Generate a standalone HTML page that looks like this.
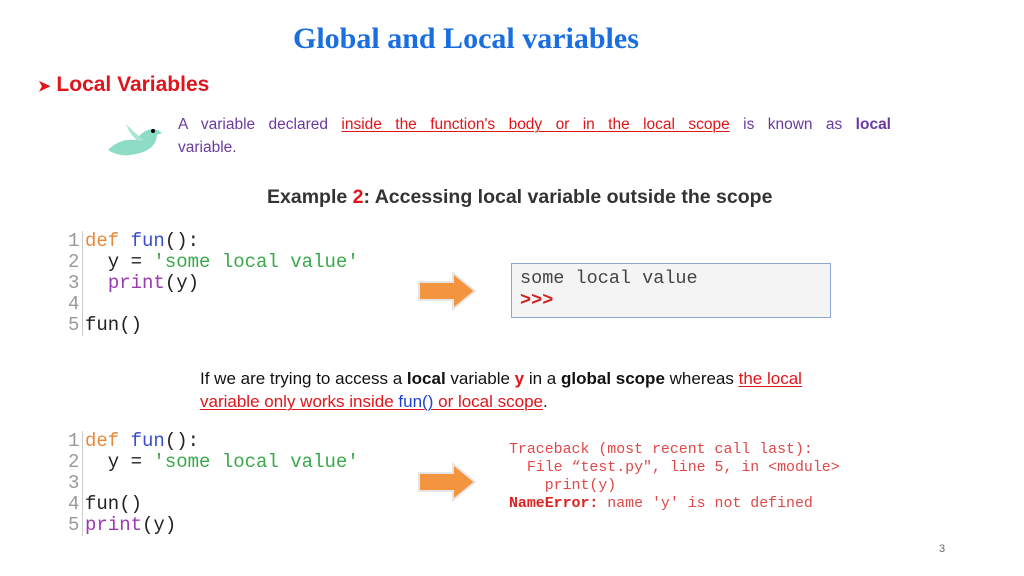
<!DOCTYPE html>
<html><head><meta charset="utf-8"><style>
body{margin:0;width:1024px;height:576px;background:#fff;position:relative;overflow:hidden;font-family:"Liberation Sans",sans-serif}
.a{position:absolute;white-space:pre}
.code{font-family:"Liberation Mono",monospace;font-size:19px;line-height:21px;color:#222}
.ln{color:#999;display:inline-block;width:14px;border-right:1px solid #ccc;margin-right:2px}
.k{color:#e8883a}.f{color:#3a4fd0}.s{color:#3aa84a}.p{color:#9a3ab0}
u{text-decoration-thickness:1px;text-underline-offset:2px}
</style></head><body>
<div class="a" style="left:293px;top:22px;font-family:'Liberation Serif',serif;font-weight:bold;font-size:30px;color:#1a6ee0">Global and Local variables</div>
<div class="a" style="left:38px;top:73px;font-size:21px;font-weight:bold;color:#e0151b"><span style="font-size:15px">&#10148;</span> Local Variables</div>
<svg class="a" style="left:106px;top:120px" width="56" height="38" viewBox="0 0 56 38"><path d="M2 30 Q14 18 30 20 Q40 6 52 10 L56 13 L51 15 Q50 30 30 34 Q14 38 2 30Z" fill="#8fdcc6"/><path d="M20 4 Q30 14 38 20 Q28 24 20 4Z" fill="#a8e6d4"/><circle cx="47" cy="11" r="2" fill="#000"/></svg>
<div class="a" style="left:178px;top:116px;width:713px;font-size:15.5px;color:#6a3aa0;text-align:justify;text-align-last:justify;white-space:normal">A variable declared <u style="color:#e0151b">inside the function's body or in the local scope</u> is known as <b>local</b></div>
<div class="a" style="left:178px;top:139px;font-size:15.5px;color:#6a3aa0">variable.</div>
<div class="a" style="left:267px;top:186px;font-size:19.5px;font-weight:bold;color:#333">Example <span style="color:#e0151b">2</span>: Accessing local variable outside the scope</div>
<div class="a code" style="left:68px;top:231px"><span class="ln">1</span><span class="k">def</span> <span class="f">fun</span>():
<span class="ln">2</span>  y = <span class="s">'some local value'</span>
<span class="ln">3</span>  <span class="p">print</span>(y)
<span class="ln">4</span>
<span class="ln">5</span>fun()</div>
<svg class="a" style="left:415px;top:270px" width="64" height="42"><path d="M4 12 H38 V3 L60 21 L38 39 V30 H4Z" fill="#f3953e" stroke="#e6e6e6" stroke-width="2"/></svg>
<div class="a" style="left:511px;top:263px;width:318px;height:53px;border:1px solid #8fa8d0;background:#f4f4f4"></div>
<div class="a" style="left:520px;top:268px;font-family:'Liberation Mono',monospace;font-size:18.5px;line-height:22px;color:#444">some local value
<b style="color:#d02020">&gt;&gt;&gt;</b></div>
<div class="a" style="left:200px;top:367px;font-size:17px;line-height:23px;color:#111">If we are trying to access a <b>local</b> variable <b style="color:#e0151b">y</b> in a <b>global scope</b> whereas <u style="color:#e0151b">the local</u>
<u style="color:#e0151b">variable only works inside <span style="color:#2040d0">fun()</span> or local scope</u>.</div>
<div class="a code" style="left:68px;top:431px"><span class="ln">1</span><span class="k">def</span> <span class="f">fun</span>():
<span class="ln">2</span>  y = <span class="s">'some local value'</span>
<span class="ln">3</span>
<span class="ln">4</span>fun()
<span class="ln">5</span><span class="p">print</span>(y)</div>
<svg class="a" style="left:415px;top:461px" width="64" height="42"><path d="M4 12 H38 V3 L60 21 L38 39 V30 H4Z" fill="#f3953e" stroke="#e6e6e6" stroke-width="2"/></svg>
<div class="a" style="left:509px;top:441px;font-family:'Liberation Mono',monospace;font-size:14.9px;line-height:18px;color:#e04848">Traceback (most recent call last):
  File “test.py", line 5, in &lt;module&gt;
    print(y)
<b style="color:#e02020">NameError:</b> name 'y' is not defined</div>
<div class="a" style="left:939px;top:543px;font-size:11px;color:#666">3</div>
</body></html>
